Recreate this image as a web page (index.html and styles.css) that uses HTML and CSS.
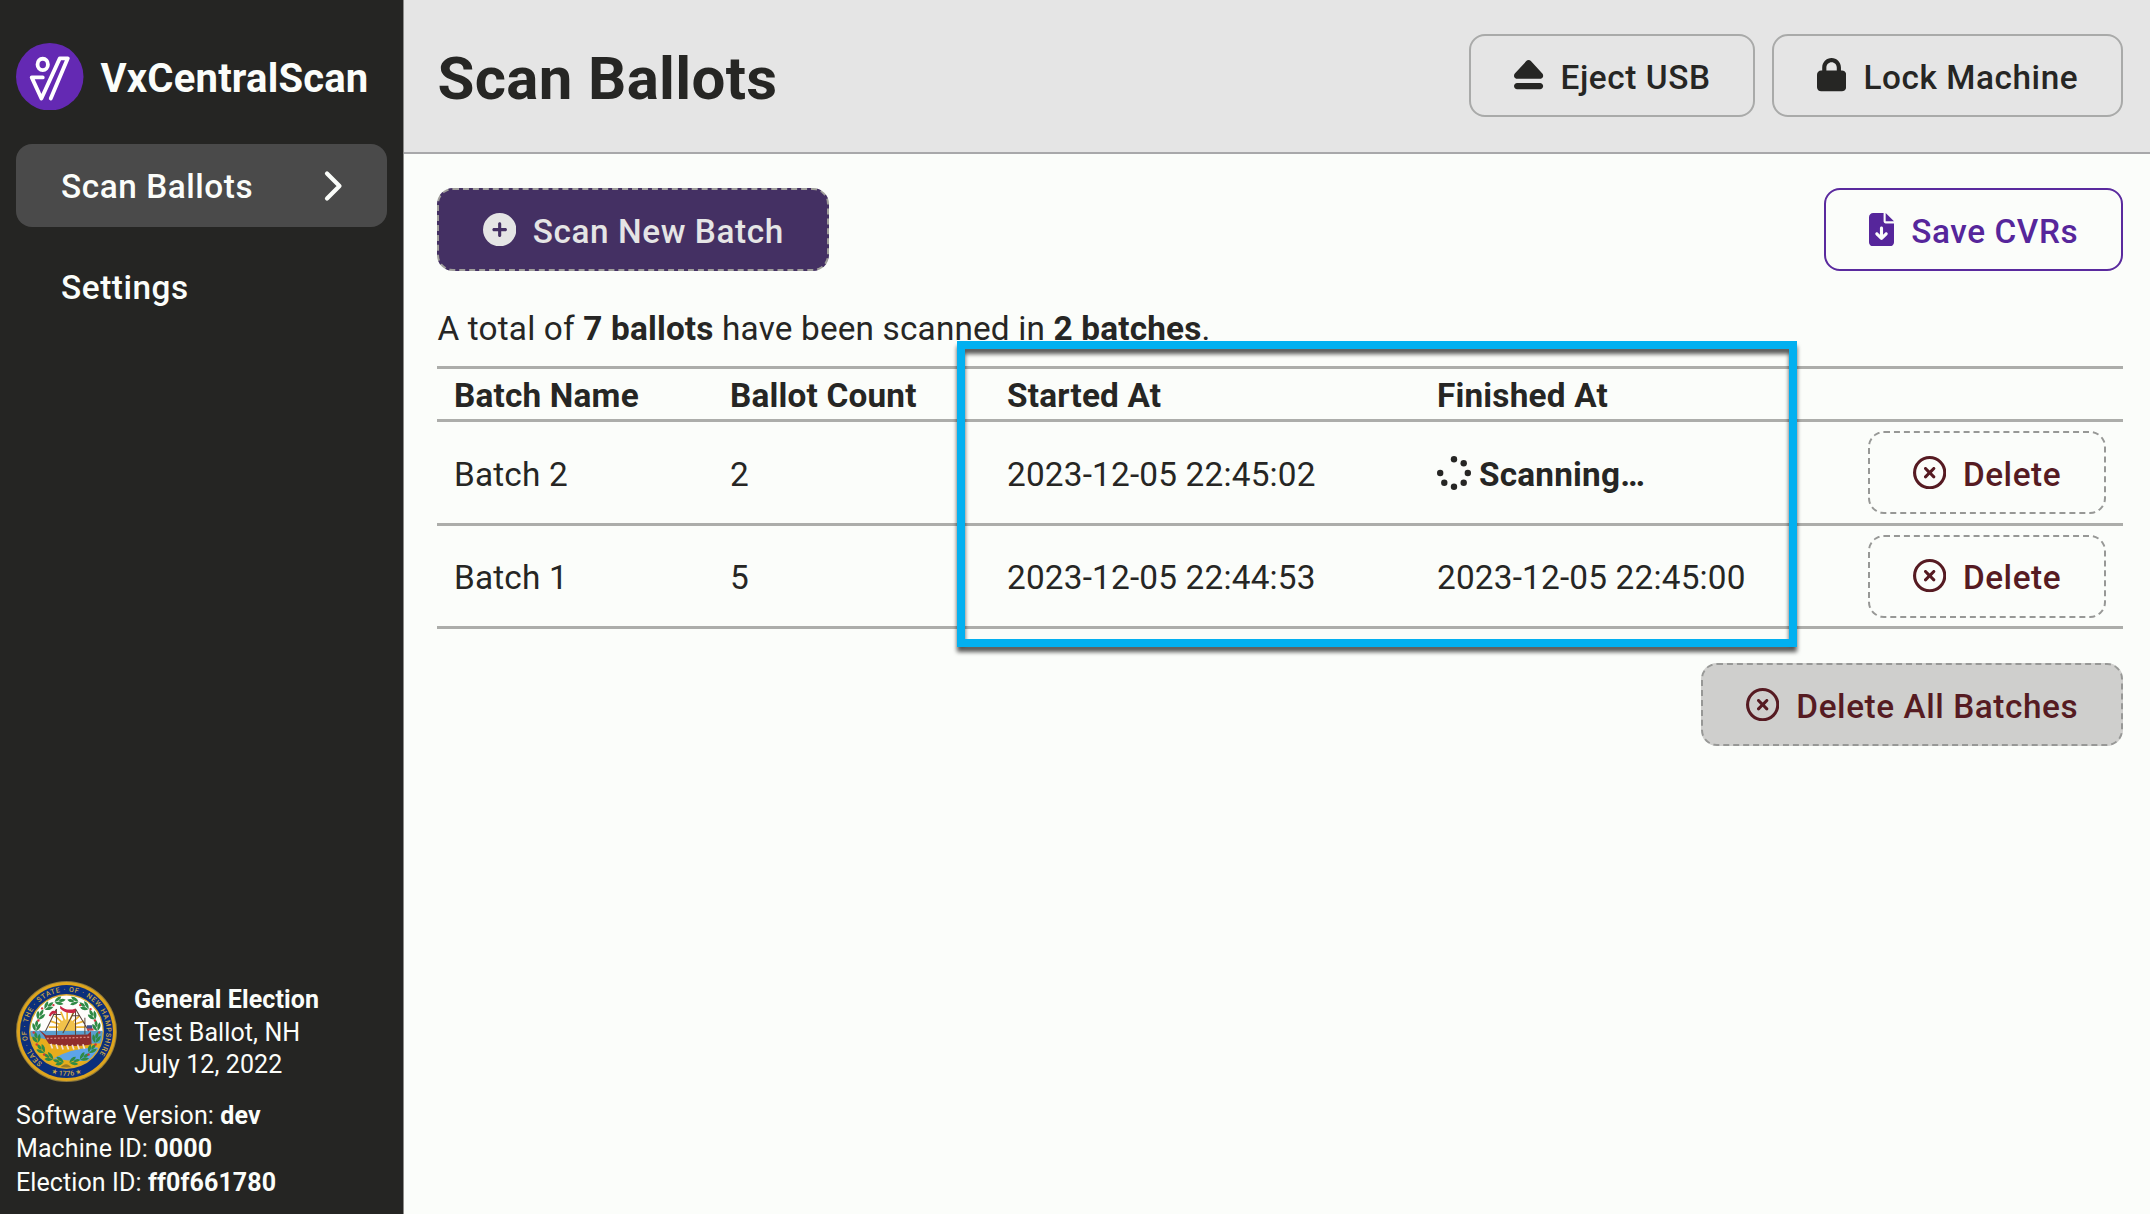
FILE: index.html
```html
<!DOCTYPE html>
<html lang="en">
<head>
<meta charset="utf-8">
<title>VxCentralScan</title>
<link rel="stylesheet" href="styles.css">
</head>
<body>
<svg class="defs" aria-hidden="true">
  <symbol id="circle-xmark" viewBox="0 0 512 512"><path d="M256 48a208 208 0 1 1 0 416 208 208 0 1 1 0-416zm0 464A256 256 0 1 0 256 0a256 256 0 1 0 0 512zM175 175c-9.4 9.4-9.4 24.6 0 33.9l47 47-47 47c-9.4 9.4-9.4 24.6 0 33.9s24.6 9.4 33.9 0l47-47 47 47c9.4 9.4 24.6 9.4 33.9 0s9.4-24.6 0-33.9l-47-47 47-47c9.4-9.4 9.4-24.6 0-33.9s-24.6-9.4-33.9 0l-47 47-47-47c-9.4-9.4-24.6-9.4-33.9 0z"/></symbol>
</svg>
<div class="app">
  <aside class="sidebar">
    <div class="brand">
      <svg class="brand-logo" viewBox="0 0 202 202"><circle cx="101" cy="101" r="101" fill="#6429b3"/><g fill="none" stroke="#fff" stroke-width="11.5" stroke-linejoin="round" stroke-linecap="round"><ellipse cx="80" cy="64" rx="15.5" ry="17"/><path d="M80 103H47L76 166L131 46H155L104 166"/></g></svg>
      <span>VxCentralScan</span>
    </div>
    <nav class="nav">
      <a class="nav-item active"><span>Scan Ballots</span><svg class="chevron" viewBox="0 0 20 32"><path d="M4 3.5L16.5 16L4 28.5"/></svg></a>
      <a class="nav-item"><span>Settings</span></a>
    </nav>
    <footer class="info">
      <div class="election">
        <svg class="seal" viewBox="0 0 302 302">
          <defs>
            <clipPath id="disc"><circle cx="151" cy="151" r="108"/></clipPath>
            <path id="ring-top" d="M79.100 245.800A119 119 0 1 1 222.900 245.800"/>
            <path id="ring-bottom" d="M68 255A133 133 0 0 0 234 255"/>
            <g id="leaves"><path d="M-15 0Q-7-16 8-12Q3 0-15 0ZM-15 1Q-5 16 10 11Q2-1-15 1ZM-3 0Q7-10 19 0Q7 8-3 0Z"/></g>
          </defs>
          <circle cx="151" cy="151" r="151" fill="#8f7a3c"/>
          <circle cx="151" cy="151" r="148" fill="#dda41d"/>
          <circle cx="151" cy="151" r="139" fill="#0b2f7c"/>
          <circle cx="151" cy="151" r="112" fill="#d9a82e"/>
          <g clip-path="url(#disc)">
            <rect x="40" y="40" width="222" height="112" fill="#fdfdfb"/>
            <g stroke="#ecb432" stroke-width="5"><path d="M153 137L153 88M153 137L134 92M153 137L172 92M153 137L116 104M153 137L190 104M153 137L103 120M153 137L203 120M153 137L98 138M153 137L208 138"/></g>
            <circle cx="153" cy="142" r="28" fill="#f1c24a"/>
            <rect x="40" y="149" width="222" height="40" fill="#5a9fce"/>
            <path d="M40 166Q90 170 130 190L262 186V262H40Z" fill="#e7ad1c"/>
            <path d="M112 232Q160 202 240 198L262 206V232Q190 246 112 232Z" fill="#5da4e8"/>
            <path d="M130 262Q150 236 168 262Z" fill="#9a7a25"/>
            <path d="M66 143L90 162L214 160L224 150L226 190Q160 200 98 188Q90 176 84 164Z" fill="#8f2d2c"/>
            <path d="M92 172L222 168" stroke="#d98a80" stroke-width="4" stroke-dasharray="6 5"/>
            <path d="M104 188l5 14M120 189l5 14M136 191l5 14M152 191l5 14M168 191l5 14M184 190l5 14M200 189l5 14" stroke="#f3e3d8" stroke-width="5"/>
            <path d="M121 84V164M178 84V164M206 110V160M110 100H134M166 104H190M121 84L88 150M178 84L140 156M178 84L218 150" stroke="#5b4337" stroke-width="3" fill="none"/>
            <path d="M122 92Q106 82 98 104L104 106Q108 94 120 98ZM132 74Q152 92 178 82V94Q150 100 132 82Z" fill="#c92745"/>
            <path d="M212 132h16v15h-16z" fill="#3c4f8f"/>
            <path d="M212 142h20v6h-20z" fill="#c44"/>
          </g>
          <g fill="#2f8a45">
            <use href="#leaves" transform="translate(130 60) rotate(-12)"/>
            <use href="#leaves" transform="translate(97 75) rotate(-38)"/>
            <use href="#leaves" transform="translate(73 102) rotate(-62)"/>
            <use href="#leaves" transform="translate(61 135) rotate(-82)"/>
            <use href="#leaves" transform="translate(62 170) rotate(-106)"/>
            <use href="#leaves" transform="translate(75 203) rotate(-130)"/>
            <use href="#leaves" transform="translate(98 227) rotate(-148)"/>
            <use href="#leaves" transform="translate(128 240) rotate(-166)"/>
            <use href="#leaves" transform="translate(172 60) rotate(192)"/>
            <use href="#leaves" transform="translate(205 75) rotate(218)"/>
            <use href="#leaves" transform="translate(229 102) rotate(242)"/>
            <use href="#leaves" transform="translate(241 135) rotate(262)"/>
            <use href="#leaves" transform="translate(240 170) rotate(286)"/>
            <use href="#leaves" transform="translate(227 203) rotate(310)"/>
            <use href="#leaves" transform="translate(204 227) rotate(328)"/>
            <use href="#leaves" transform="translate(174 240) rotate(346)"/>
          </g>
          <g fill="#d3363c"><circle cx="112" cy="72" r="3.500"/><circle cx="78" cy="82" r="3.500"/><circle cx="67" cy="118" r="3.500"/><circle cx="53" cy="154" r="3.500"/><circle cx="62" cy="190" r="3.500"/><circle cx="84" cy="220" r="3.500"/><circle cx="192" cy="72" r="3.500"/><circle cx="223" cy="84" r="3.500"/><circle cx="236" cy="118" r="3.500"/><circle cx="249" cy="154" r="3.500"/><circle cx="238" cy="190" r="3.500"/><circle cx="217" cy="220" r="3.500"/></g>
          <text class="seal-text"><textPath href="#ring-top" textLength="555">SEAL · OF · THE · STATE · OF · NEW HAMPSHIRE</textPath></text>
          <text class="seal-text" text-anchor="middle"><textPath href="#ring-bottom" startOffset="50%">★ 1776 ★</textPath></text>
        </svg>
        <div class="election-text"><b>General Election</b><span>Test Ballot, NH</span><span>July 12, 2022</span></div>
      </div>
      <div class="meta">
        <div>Software Version: <b>dev</b></div>
        <div>Machine ID: <b>0000</b></div>
        <div>Election ID: <b>ff0f661780</b></div>
      </div>
    </footer>
  </aside>
  <main class="main">
    <header class="header">
      <h1>Scan Ballots</h1>
      <div class="header-actions">
        <button class="btn"><svg class="icon w448" viewBox="0 0 448 512"><path d="M224 32c13.500 0 26.300 5.600 35.400 15.600l176 192c12.900 14 16.200 34.300 8.600 51.800S419 320 400 320H48c-19 0-36.300-11.200-43.900-28.700s-4.300-37.700 8.600-51.800l176-192C197.700 37.600 210.500 32 224 32zM0 432c0-26.500 21.500-48 48-48H400c26.500 0 48 21.500 48 48s-21.500 48-48 48H48c-26.500 0-48-21.500-48-48z"/></svg><span>Eject USB</span></button>
        <button class="btn"><svg class="icon w448" viewBox="0 0 448 512"><path d="M144 144v48H304V144c0-44.200-35.800-80-80-80s-80 35.800-80 80zM80 192V144C80 64.500 144.500 0 224 0s144 64.500 144 144v48h16c35.300 0 64 28.700 64 64V448c0 35.300-28.700 64-64 64H64c-35.300 0-64-28.700-64-64V256c0-35.300 28.700-64 64-64H80z"/></svg><span>Lock Machine</span></button>
      </div>
    </header>
    <section class="content">
      <div class="toolbar">
        <button class="btn primary"><svg class="icon" viewBox="0 0 512 512"><path d="M256 512A256 256 0 1 0 256 0a256 256 0 1 0 0 512zM232 344V280H168c-13.300 0-24-10.700-24-24s10.700-24 24-24h64V168c0-13.300 10.700-24 24-24s24 10.700 24 24v64h64c13.300 0 24 10.700 24 24s-10.700 24-24 24H280v64c0 13.300-10.700 24-24 24s-24-10.700-24-24z"/></svg><span>Scan New Batch</span></button>
        <button class="btn outline"><svg class="icon w384" viewBox="0 0 384 512"><path d="M64 0C28.700 0 0 28.700 0 64V448c0 35.300 28.700 64 64 64H320c35.300 0 64-28.700 64-64V160H256c-17.700 0-32-14.300-32-32V0H64zM256 0V128H384L256 0zM216 232V334.100l31-31c9.400-9.400 24.600-9.400 33.900 0s9.400 24.600 0 33.900l-72 72c-9.400 9.400-24.600 9.400-33.900 0l-72-72c-9.400-9.400-9.400-24.600 0-33.900s24.600-9.400 33.900 0l31 31V232c0-13.300 10.700-24 24-24s24 10.700 24 24z"/></svg><span>Save CVRs</span></button>
      </div>
      <p class="summary">A total of <b>7 ballots</b> have been scanned in <b>2 batches</b>.</p>
      <div class="table-wrap">
        <table class="batches">
          <colgroup><col class="c-name"><col class="c-count"><col class="c-start"><col class="c-end"><col></colgroup>
          <thead><tr><th>Batch Name</th><th>Ballot Count</th><th>Started At</th><th>Finished At</th><th></th></tr></thead>
          <tbody>
            <tr class="first"><td>Batch 2</td><td>2</td><td>2023-12-05 22:45:02</td><td><div class="scanning"><svg class="spinner" viewBox="0 0 34 34"><circle cx="17" cy="3.200" r="3.200"/><circle cx="26.700" cy="7.300" r="3.200"/><circle cx="30.800" cy="17" r="3.200"/><circle cx="26.700" cy="26.700" r="3.200"/><circle cx="17" cy="30.800" r="3.200"/><circle cx="7.300" cy="26.700" r="3.200"/><circle cx="3.200" cy="17" r="3.200"/></svg><b>Scanning…</b></div></td><td class="action"><button class="btn danger"><svg class="icon"><use href="#circle-xmark"/></svg><span>Delete</span></button></td></tr>
            <tr><td>Batch 1</td><td>5</td><td>2023-12-05 22:44:53</td><td>2023-12-05 22:45:00</td><td class="action"><button class="btn danger"><svg class="icon"><use href="#circle-xmark"/></svg><span>Delete</span></button></td></tr>
          </tbody>
        </table>
        <div class="highlight"></div>
      </div>
      <div class="bulk"><button class="btn danger filled"><svg class="icon"><use href="#circle-xmark"/></svg><span>Delete All Batches</span></button></div>
    </section>
  </main>
</div>
</body>
</html>
```
FILE: styles.css
```css
* { box-sizing: border-box; }
body {
  margin: 0;
  font-family: Roboto, sans-serif;
  font-size: 33.33px;
  letter-spacing: 0.19px;
  color: #262624;
  background: #fbfdfa;
}
b { font-weight: 700; }
.defs { position: absolute; width: 0; height: 0; }
.app { display: flex; height: 1214px; overflow: hidden; }

/* Sidebar */
.sidebar {
  flex: none;
  width: 404px;
  display: flex;
  flex-direction: column;
  background: #252523;
  border-right: 1px solid #8c8c8a;
  color: #fbfdfa;
}
.brand {
  display: flex;
  align-items: center;
  gap: 17px;
  height: 144px;
  padding: 9px 0 0 16px;
  font-size: 40px;
  font-weight: 700;
}
.brand span { padding-top: 3px; }
.brand-logo { width: 67.500px; height: 67.500px; }
.nav { display: flex; flex-direction: column; gap: 18px; padding: 0 16px; }
.nav-item {
  display: flex;
  align-items: center;
  justify-content: space-between;
  height: 83px;
  padding: 2px 44px 0 45px;
  border-radius: 16px;
  font-weight: 500;
  letter-spacing: 0.55px;
}
.nav-item.active { background: #4a4a4a; }
.chevron { width: 20px; height: 32px; margin-top: -2px; fill: none; stroke: #fbfdfa; stroke-width: 4.200; stroke-linecap: round; stroke-linejoin: round; }
.info { margin-top: auto; padding: 0 16px 15px; font-size: 25px; line-height: 32.700px; letter-spacing: 0.1px; }
.election { display: flex; gap: 17px; margin-bottom: 17px; }
.seal { width: 101px; height: 101px; }
.seal-text { font-family: Roboto, sans-serif; font-size: 21px; font-weight: 500; letter-spacing: 0; fill: #cda845; }
.election-text { display: flex; flex-direction: column; padding-top: 3.500px; }
.meta { line-height: 33.300px; }

/* Header */
.main { flex: 1; min-width: 0; display: flex; flex-direction: column; }
.header {
  display: flex;
  align-items: center;
  justify-content: space-between;
  height: 154px;
  padding: 0 27px 2px 33.500px;
  background: #e5e5e5;
  border-bottom: 2px solid #a8a8aa;
}
h1 { margin: 0; padding-top: 8px; font-size: 60px; line-height: 1.200; font-weight: 700; letter-spacing: 0.33px; }
.header-actions { display: flex; gap: 17px; }

/* Buttons */
.btn {
  display: inline-flex;
  align-items: center;
  gap: 17px;
  height: 83px;
  padding: 0 42.800px 0 43px;
  border: 2px solid #a9aaa9;
  border-radius: 16px;
  background: transparent;
  color: #262624;
  font: inherit;
  font-weight: 500;
  letter-spacing: 0.57px;
  white-space: nowrap;
}
.btn span { padding-top: 3px; }
.header .btn span { padding-top: 4px; }
.icon { flex: none; width: 33.330px; height: 33.330px; fill: currentColor; }
.icon.w448 { width: 29.170px; }
.icon.w384 { width: 25px; }
.btn.primary { padding-left: 43.500px; background: #443063; border: 2px dashed #a09f9b; color: #e5e5e5; }
.btn.outline { border-color: #5a2a9e; color: #56269b; }
.btn.danger { border: 2px dashed #979896; color: #561b22; }
.btn.filled { background: #cfcfcd; }

/* Content */
.content { padding: 34px 27px 0 33px; }
.toolbar { display: flex; justify-content: space-between; }
.summary { margin: 37px 0 0; height: 58px; line-height: 40px; padding: 1px 0 0 0.500px; letter-spacing: 0.17px; }
.table-wrap { position: relative; }
.batches { width: 100%; table-layout: fixed; border-collapse: separate; border-spacing: 0; }
.c-name { width: 276px; }
.c-count { width: 277px; }
.c-start { width: 430px; }
.c-end { width: 368px; }
.batches th, .batches td {
  height: 103px;
  padding: 3px 17px 0;
  text-align: left;
  vertical-align: middle;
  border-bottom: 3px solid #acadaa;
}
.batches th { height: 56px; border-top: 3px solid #acadaa; font-weight: 700; }
.batches .first td { height: 104px; }
.batches td.action { padding-top: 0; text-align: right; }
.action .btn { vertical-align: middle; }
.scanning { display: flex; align-items: center; gap: 8px; }
.spinner { width: 34px; height: 34px; fill: #262624; margin-top: -2px; }
/* Callout frame over the start and finish columns */
.highlight {
  position: absolute;
  left: 520px;
  top: -25px;
  width: 840px;
  height: 306px;
  border: 8px solid #02b0f0;
  filter: drop-shadow(0 5px 2px rgba(0, 0, 0, 0.65));
}
.bulk { display: flex; justify-content: flex-end; margin-top: 34px; }
```
